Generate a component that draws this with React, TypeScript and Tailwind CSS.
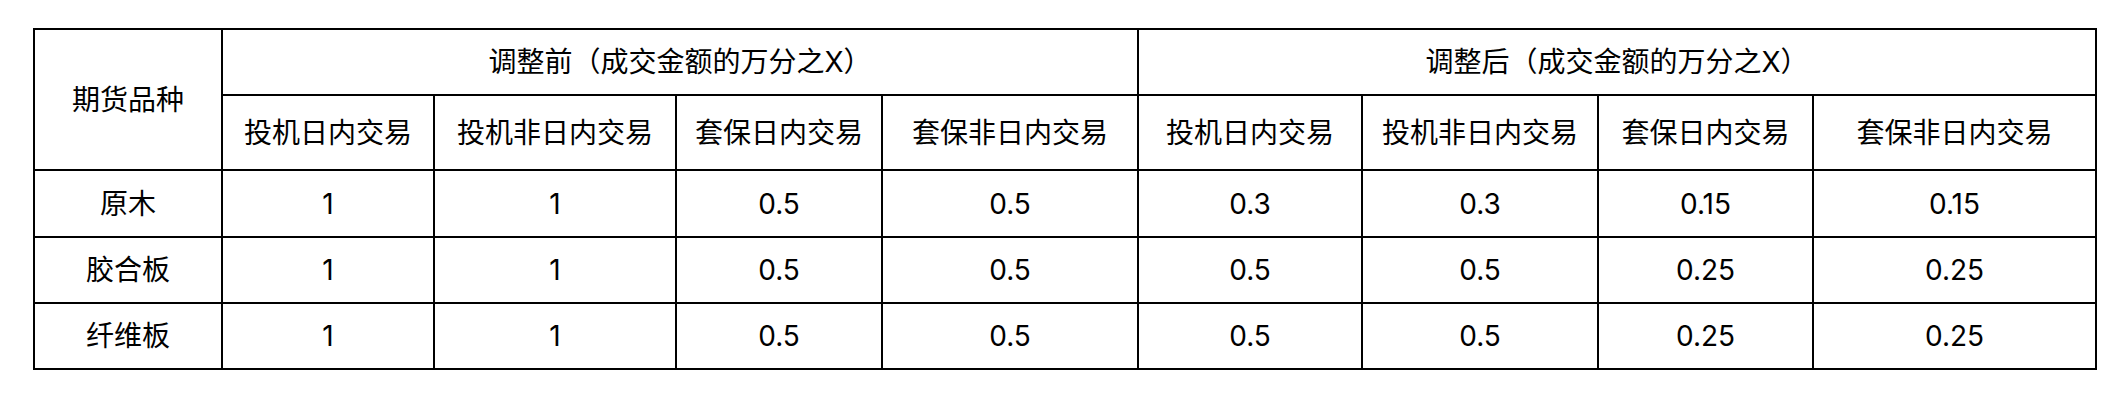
import { Fragment } from "react";

const subHeads = ["投机日内交易", "投机非日内交易", "套保日内交易", "套保非日内交易"];

const rows: { name: string; values: string[] }[] = [
  { name: "原木", values: ["1", "1", "0.5", "0.5", "0.3", "0.3", "0.15", "0.15"] },
  { name: "胶合板", values: ["1", "1", "0.5", "0.5", "0.5", "0.5", "0.25", "0.25"] },
  { name: "纤维板", values: ["1", "1", "0.5", "0.5", "0.5", "0.5", "0.25", "0.25"] },
];

function Cell({ children, className = "" }: { children: React.ReactNode; className?: string }) {
  return (
    <div className={`bg-white flex items-center justify-center whitespace-nowrap ${className}`}>
      {children}
    </div>
  );
}

export default function App() {
  return (
    <div className="w-[2124px] h-[408px] bg-white pt-[28px] pl-[33px] text-[28px] leading-none text-black font-[family-name:Inter,'Noto_Sans_CJK_SC',sans-serif]">
      <div className="inline-grid grid-cols-[186px_210px_240px_204px_254px_222px_234px_213px_281px] grid-rows-[64px_73px_65px_64px_64px] gap-[2px] p-[2px] bg-black">
        {/* header */}
        <Cell className="row-span-2">期货品种</Cell>
        <Cell className="col-span-4">调整前（成交金额的万分之X）</Cell>
        <Cell className="col-span-4">调整后（成交金额的万分之X）</Cell>
        {[...subHeads, ...subHeads].map((h, i) => (
          <Cell key={i}>{h}</Cell>
        ))}

        {/* body */}
        {rows.map((r) => (
          <Fragment key={r.name}>
            <Cell>{r.name}</Cell>
            {r.values.map((v, i) => (
              <Cell key={i}>{v}</Cell>
            ))}
          </Fragment>
        ))}
      </div>
    </div>
  );
}
